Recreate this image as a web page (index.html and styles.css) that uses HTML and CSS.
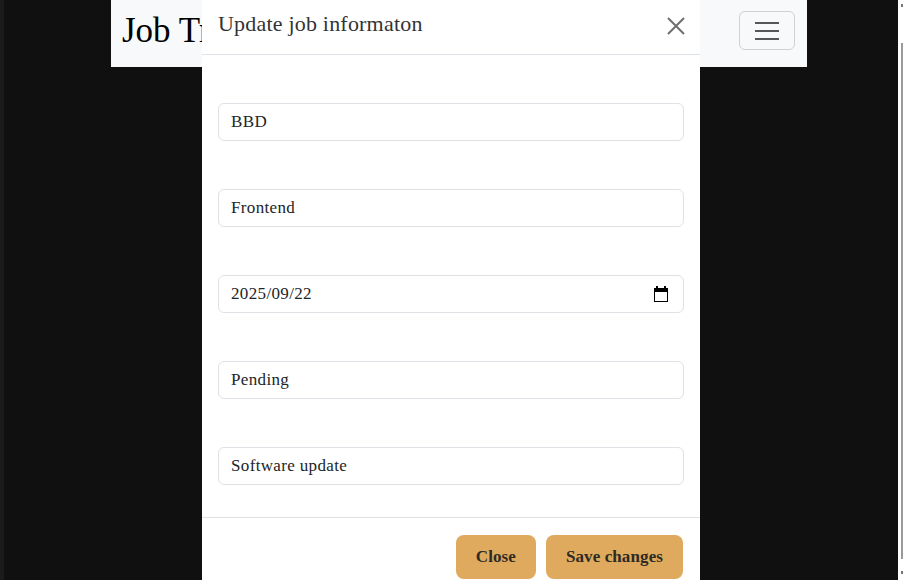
FILE: index.html
```html
<!DOCTYPE html>
<html lang="en">
<head>
<meta charset="utf-8">
<title>Job Tracker</title>
<link rel="stylesheet" href="styles.css">
</head>
<body>
<div class="edge"></div>
<div class="stage">
  <nav class="navbar">
    <span class="brand">Job Tracker</span>
    <button class="toggler" aria-label="menu">
      <span class="bar"></span><span class="bar"></span><span class="bar"></span>
    </button>
  </nav>
  <div class="modal">
    <div class="modal-header">
      <h5 class="modal-title">Update job informaton</h5>
      <button class="btn-close" aria-label="close">
        <svg width="18" height="18" viewBox="0 0 18 18"><path d="M1 1 L17 17 M17 1 L1 17" stroke="#6f6f6f" stroke-width="2" fill="none"/></svg>
      </button>
    </div>
    <div class="modal-body">
      <input class="field" type="text" value="BBD">
      <input class="field" type="text" value="Frontend">
      <div class="date-wrap">
        <input class="field" type="text" value="2025/09/22">
        <svg class="cal" width="14" height="16" viewBox="0 0 14 16"><rect x="0.5" y="2.5" width="13" height="13" fill="none" stroke="#000"/><rect x="0" y="2" width="14" height="4" fill="#000"/><rect x="2" y="0" width="2" height="3" fill="#000"/><rect x="10" y="0" width="2" height="3" fill="#000"/></svg>
      </div>
      <input class="field" type="text" value="Pending">
      <input class="field" type="text" value="Software update">
    </div>
    <div class="modal-footer">
      <button class="btn">Close</button>
      <button class="btn">Save changes</button>
    </div>
  </div>
</div>
<div class="scroll">
  <span class="arrow up"></span>
  <span class="thumb"></span>
  <span class="arrow down"></span>
</div>
</body>
</html>
```
FILE: styles.css
```css
* { box-sizing: border-box; }
html, body { margin: 0; padding: 0; height: 100%; overflow: hidden; }
body {
  display: flex;
  background: #111010;
  font-family: "Liberation Serif", "DejaVu Serif", serif;
  color: #212529;
}
.edge { width: 4px; background: #1b1b1b; flex: none; }
.stage { flex: 1; position: relative; }
.navbar {
  margin-left: 107px;
  width: 696px;
  height: 67px;
  background: #f8f9fa;
  display: flex;
  align-items: center;
  justify-content: space-between;
  padding: 0 12px 6px 11px;
}
.brand { font-size: 35px; color: #000; line-height: 1; }
.toggler {
  width: 56px; height: 39px;
  border: 1px solid #cfd0d2;
  border-radius: 6px;
  background: transparent;
  display: flex; flex-direction: column; align-items: center; justify-content: center; gap: 6px;
  padding: 0;
  margin-top: 0;
}
.bar { display: block; width: 24px; height: 2px; background: #55575b; }
.modal {
  position: absolute;
  top: 0; left: 198px;
  width: 498px;
  background: #fff;
}
.modal-header {
  height: 55px;
  border-bottom: 1px solid #dee2e6;
  display: flex; align-items: center; justify-content: space-between;
  padding: 0 15px 7px 16px;
}
.modal-title { margin: 0; font-size: 22px; letter-spacing: 0.2px; font-weight: 400; color: #333; }
.btn-close { background: none; border: 0; padding: 0; width: 18px; height: 18px; display: flex; margin-top: 5px; }
.modal-body {
  padding: 48px 16px 32px;
  display: flex; flex-direction: column; gap: 48px;
}
.field {
  display: block;
  width: 100%;
  height: 38px;
  border: 1px solid #dee2e6;
  border-radius: 6px;
  padding: 0 12px;
  font: 17px "Liberation Serif", "DejaVu Serif", serif;
  letter-spacing: 0.35px;
  color: #212529;
  background: #fff;
  outline: none;
}
.date-wrap { position: relative; }
.cal { position: absolute; right: 16px; top: 11px; }
.modal-footer {
  border-top: 1px solid #dee2e6;
  display: flex; justify-content: flex-end; gap: 10px;
  padding: 17px 17px 4px;
}
.btn {
  height: 44px;
  padding: 0 20px;
  border: 0;
  border-radius: 8px;
  background: #dfaa5e;
  color: #2e2a24;
  font: 700 17px "Liberation Serif", "DejaVu Serif", serif;
  letter-spacing: 0.1px;
}
.scroll {
  width: 5px; flex: none; background: #fff;
  display: flex; flex-direction: column; align-items: flex-end;
}
.thumb { display: block; width: 2px; flex: 1; background: #9a9a9a; margin: 36px 0 12px; }
.arrow { display: block; width: 2px; height: 3px; background: #777; }
.arrow.up { margin-top: 4px; }
.arrow.down { margin-bottom: 6px; }
```
